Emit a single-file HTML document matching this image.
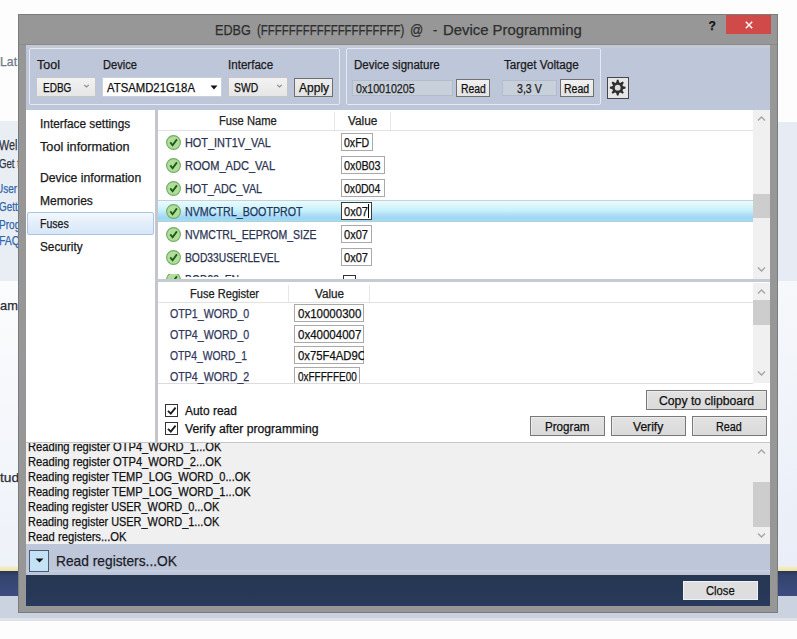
<!DOCTYPE html>
<html><head><meta charset="utf-8"><style>
html,body{margin:0;padding:0;width:797px;height:639px;overflow:hidden;background:#fff}
body{position:relative;font-family:"Liberation Sans",sans-serif}
div,span,svg{position:absolute}
span{white-space:nowrap;line-height:1;transform-origin:0 0;-webkit-text-stroke:0.25px currentColor}
</style></head><body>
<div style="left:0px;top:0px;width:797px;height:639px;background:#fdfdfd"></div>
<div style="left:0px;top:121px;width:18px;height:160px;background:#e9eef5"></div>
<div style="left:777px;top:122px;width:20px;height:159px;background:#e7ecf4"></div>
<div style="left:0px;top:281px;width:18px;height:285px;background:linear-gradient(#fbfcfd,#eef2f9)"></div>
<div style="left:777px;top:281px;width:20px;height:285px;background:linear-gradient(#f6f8fb,#e9eef8)"></div>
<div style="left:0px;top:566px;width:797px;height:5px;background:linear-gradient(#f3efd4,#efe3a4)"></div>
<div style="left:0px;top:571px;width:797px;height:25px;background:linear-gradient(#2a3758,#34446e 20%,#3c4c80)"></div>
<div style="left:0px;top:596px;width:797px;height:22px;background:#cad3df"></div>
<div style="left:0px;top:618px;width:797px;height:3px;background:#dde1e8"></div>
<span style="left:-0.50px;top:55px;font-size:13px;color:#6e7a88;transform:scaleX(0.9444);">Lat</span>
<span style="left:-1.00px;top:138px;font-size:14px;color:#30353e;transform:scaleX(0.7708);">Wel</span>
<span style="left:-1.50px;top:157px;font-size:13px;color:#30353e;transform:scaleX(0.7414);">Get t</span>
<span style="left:-4.00px;top:182px;font-size:13px;color:#2f66aa;transform:scaleX(0.7679);">User</span>
<span style="left:-1.50px;top:200px;font-size:13px;color:#2f66aa;transform:scaleX(0.7600);">Gett</span>
<span style="left:-1.50px;top:218px;font-size:13px;color:#2f66aa;transform:scaleX(0.7778);">Prog</span>
<span style="left:-1.50px;top:234px;font-size:13px;color:#2f66aa;transform:scaleX(0.8077);">FAQ</span>
<span style="left:0.00px;top:299px;font-size:13px;color:#262a33;transform:scaleX(0.9889);">am</span>
<span style="left:0.00px;top:472px;font-size:12px;color:#2a303c;transform:scaleX(1.1471);">tud</span>
<div style="left:18px;top:14px;width:760px;height:599px;background:#979797;box-shadow:inset 0 0 0 1px #7c7c7c"></div>
<div style="left:19px;top:44px;width:758px;height:1px;background:#8a8a8a"></div>
<span style="left:215.00px;top:23px;font-size:14px;color:#2e2e2e;transform:scaleX(0.9000);">EDBG</span>
<span style="left:257.00px;top:23px;font-size:14px;color:#2e2e2e;transform:scaleX(0.8167);">(FFFFFFFFFFFFFFFFFFFF)</span>
<span style="left:410.00px;top:23px;font-size:14px;color:#2e2e2e;transform:scaleX(0.9286);">@</span>
<span style="left:433.00px;top:23px;font-size:14px;color:#2e2e2e;transform:scaleX(0.9000);">-</span>
<span style="left:442.50px;top:23px;font-size:14px;color:#2e2e2e;transform:scaleX(1.0611);">Device Programming</span>
<span style="left:708.50px;top:20px;font-size:12px;color:#111;font-weight:bold;">?</span>
<div style="left:726px;top:15px;width:45px;height:19px;background:#d04a4a"></div>
<svg style="left:744px;top:20px" width="10" height="10" viewBox="0 0 10 10"><path d="M1.8 1.8L8.2 8.2M8.2 1.8L1.8 8.2" stroke="#fff" stroke-width="1.4"/></svg>
<div style="left:26px;top:45px;width:744px;height:65px;background:#bec6d9"></div>
<div style="left:26px;top:45px;width:744px;height:3px;background:#c4c9d6"></div>
<div style="left:29px;top:48px;width:311px;height:57px;border:1px solid #e4e9f2;border-radius:2px;box-sizing:border-box"></div>
<div style="left:346px;top:48px;width:255px;height:57px;border:1px solid #e4e9f2;border-radius:2px;box-sizing:border-box"></div>
<span style="left:36.70px;top:59px;font-size:12px;color:#1a1a1a;transform:scaleX(1.0409);">Tool</span>
<span style="left:102.60px;top:59px;font-size:12px;color:#1a1a1a;transform:scaleX(0.9243);">Device</span>
<span style="left:228.30px;top:59px;font-size:12px;color:#1a1a1a;transform:scaleX(0.9660);">Interface</span>
<span style="left:353.80px;top:59px;font-size:12px;color:#1a1a1a;transform:scaleX(0.9578);">Device signature</span>
<span style="left:503.70px;top:59px;font-size:12px;color:#1a1a1a;transform:scaleX(0.9753);">Target Voltage</span>
<div style="left:36px;top:77px;width:60px;height:20px;background:linear-gradient(#f2f2f2,#e6e6e6);border:1px solid #c6c6ca;box-sizing:border-box"></div>
<span style="left:42.50px;top:82px;font-size:12px;color:#111;transform:scaleX(0.8324);">EDBG</span>
<svg style="left:83px;top:83px" width="8" height="6" viewBox="0 0 8 6"><path d="M1.2 1.8L3.5 4L5.8 1.8" stroke="#8a8a8a" stroke-width="1.1" fill="none"/></svg>
<div style="left:102px;top:77px;width:120px;height:20px;background:#fff;border:1px solid #c8d0dc;box-sizing:border-box"></div>
<span style="left:107.00px;top:82px;font-size:12px;color:#111;transform:scaleX(0.9441);">ATSAMD21G18A</span>
<svg style="left:210px;top:85px" width="8" height="5" viewBox="0 0 8 5"><path d="M0.5 0.5H7.5L4 4.5Z" fill="#111"/></svg>
<div style="left:228px;top:77px;width:60px;height:20px;background:linear-gradient(#f2f2f2,#e6e6e6);border:1px solid #c6c6ca;box-sizing:border-box"></div>
<span style="left:234.20px;top:82px;font-size:12px;color:#111;transform:scaleX(0.8607);">SWD</span>
<svg style="left:276px;top:83px" width="8" height="6" viewBox="0 0 8 6"><path d="M1.2 1.8L3.5 4L5.8 1.8" stroke="#8a8a8a" stroke-width="1.1" fill="none"/></svg>
<div style="left:294px;top:78px;width:39px;height:19px;background:linear-gradient(#eeeeee,#e2e2e2);border:1px solid #6f6f6f;box-sizing:border-box"></div>
<span style="left:298.50px;top:82px;font-size:12px;color:#111;transform:scaleX(1.0033);">Apply</span>
<div style="left:352px;top:80px;width:101px;height:16px;background:#c8d0dc;border:1px solid #b2bccb;box-sizing:border-box"></div>
<span style="left:356.30px;top:83px;font-size:12px;color:#222;transform:scaleX(0.8864);">0x10010205</span>
<div style="left:456px;top:79px;width:34px;height:18px;background:linear-gradient(#f0f0f0,#e4e4e4);border:1px solid #707070;box-sizing:border-box"></div>
<span style="left:460.50px;top:83px;font-size:12px;color:#111;transform:scaleX(0.8655);">Read</span>
<div style="left:502px;top:80px;width:55px;height:16px;background:#c8d0dc;border:1px solid #b2bccb;box-sizing:border-box"></div>
<span style="left:517.10px;top:83px;font-size:12px;color:#222;transform:scaleX(0.8821);">3,3 V</span>
<div style="left:560px;top:79px;width:34px;height:18px;background:linear-gradient(#f0f0f0,#e4e4e4);border:1px solid #707070;box-sizing:border-box"></div>
<span style="left:564.30px;top:83px;font-size:12px;color:#111;transform:scaleX(0.8793);">Read</span>
<div style="left:607px;top:77px;width:22px;height:22px;background:#e6e6e6;border:1px solid #45454d;box-sizing:border-box"></div>
<svg style="left:607px;top:77px" width="22" height="22" viewBox="0 0 22 22"><polygon points="8.98,6.22 9.87,2.84 11.53,2.84 12.42,6.22 12.65,6.31 15.67,4.56 16.84,5.73 15.09,8.75 15.18,8.98 18.56,9.87 18.56,11.53 15.18,12.42 15.09,12.65 16.84,15.67 15.67,16.84 12.65,15.09 12.42,15.18 11.53,18.56 9.87,18.56 8.98,15.18 8.75,15.09 5.73,16.84 4.56,15.67 6.31,12.65 6.22,12.42 2.84,11.53 2.84,9.87 6.22,8.98 6.31,8.75 4.56,5.73 5.73,4.56 8.75,6.31" fill="#2f2f2f"/><circle cx="10.7" cy="10.7" r="5.4" fill="#2f2f2f"/><circle cx="10.7" cy="10.7" r="2.9" fill="#dedede"/></svg>
<div style="left:26px;top:110px;width:129px;height:332px;background:#fff"></div>
<div style="left:155px;top:110px;width:3px;height:332px;background:#c4c6cc"></div>
<span style="left:40.00px;top:118px;font-size:12px;color:#1a1a1a;transform:scaleX(0.9868);">Interface settings</span>
<span style="left:40.00px;top:141px;font-size:12px;color:#1a1a1a;transform:scaleX(1.0565);">Tool information</span>
<span style="left:40.00px;top:172px;font-size:12px;color:#1a1a1a;transform:scaleX(1.0182);">Device information</span>
<span style="left:40.00px;top:195px;font-size:12px;color:#1a1a1a;transform:scaleX(1.0038);">Memories</span>
<div style="left:27px;top:212px;width:127px;height:23px;background:linear-gradient(#f2f7fd,#d6e6f8);border:1px solid #a9c6e6;border-radius:2px;box-sizing:border-box"></div>
<span style="left:40.00px;top:218px;font-size:12px;color:#1a1a1a;transform:scaleX(0.8788);">Fuses</span>
<span style="left:40.00px;top:241px;font-size:12px;color:#1a1a1a;transform:scaleX(0.9814);">Security</span>
<div style="left:158px;top:110px;width:612px;height:169px;background:#fff"></div>
<div style="left:158px;top:130px;width:595px;height:1px;background:#e2e2e2"></div>
<div style="left:334px;top:112px;width:1px;height:18px;background:#e6e6e6"></div>
<div style="left:390px;top:112px;width:1px;height:18px;background:#e6e6e6"></div>
<span style="left:218.90px;top:115px;font-size:12px;color:#222;transform:scaleX(0.9290);">Fuse Name</span>
<span style="left:348.00px;top:115px;font-size:12px;color:#222;transform:scaleX(0.9867);">Value</span>
<div style="left:158px;top:200px;width:595px;height:22px;background:linear-gradient(#ebfbfe,#d9f6fc 25%,#c4f2fa 48%,#bde0f8 62%,#9ad8f6 85%,#a4ddf0);border-top:1px solid #bfd4dc;border-bottom:1px solid #b6ced8;box-sizing:border-box"></div>
<svg style="left:166px;top:135px" width="15" height="15" viewBox="0 0 15 15"><circle cx="7.5" cy="7.5" r="6.9" fill="#b0de9a" stroke="#72ab66" stroke-width="1.1"/><path d="M4.3 7.4L6.6 10.2L10.9 4.4" stroke="#1a5a14" stroke-width="1.8" fill="none"/></svg>
<div style="left:341px;top:133px;width:32px;height:18px;background:#fff;border:1px solid #a9a9a9;box-sizing:border-box"></div>
<span style="left:184.70px;top:137px;font-size:12px;color:#2a3350;transform:scaleX(0.9084);">HOT_INT1V_VAL</span>
<span style="left:344.10px;top:137px;font-size:12px;color:#111;transform:scaleX(0.8793);">0xFD</span>
<svg style="left:166px;top:158px" width="15" height="15" viewBox="0 0 15 15"><circle cx="7.5" cy="7.5" r="6.9" fill="#b0de9a" stroke="#72ab66" stroke-width="1.1"/><path d="M4.3 7.4L6.6 10.2L10.9 4.4" stroke="#1a5a14" stroke-width="1.8" fill="none"/></svg>
<div style="left:341px;top:156px;width:44px;height:18px;background:#fff;border:1px solid #a9a9a9;box-sizing:border-box"></div>
<span style="left:184.70px;top:160px;font-size:12px;color:#2a3350;transform:scaleX(0.9214);">ROOM_ADC_VAL</span>
<span style="left:344.10px;top:160px;font-size:12px;color:#111;transform:scaleX(0.9000);">0x0B03</span>
<svg style="left:166px;top:181px" width="15" height="15" viewBox="0 0 15 15"><circle cx="7.5" cy="7.5" r="6.9" fill="#b0de9a" stroke="#72ab66" stroke-width="1.1"/><path d="M4.3 7.4L6.6 10.2L10.9 4.4" stroke="#1a5a14" stroke-width="1.8" fill="none"/></svg>
<div style="left:341px;top:179px;width:44px;height:18px;background:#fff;border:1px solid #a9a9a9;box-sizing:border-box"></div>
<span style="left:184.70px;top:183px;font-size:12px;color:#2a3350;transform:scaleX(0.8988);">HOT_ADC_VAL</span>
<span style="left:344.10px;top:183px;font-size:12px;color:#111;transform:scaleX(0.8786);">0x0D04</span>
<svg style="left:166px;top:204px" width="15" height="15" viewBox="0 0 15 15"><circle cx="7.5" cy="7.5" r="6.9" fill="#b0de9a" stroke="#72ab66" stroke-width="1.1"/><path d="M4.3 7.4L6.6 10.2L10.9 4.4" stroke="#1a5a14" stroke-width="1.8" fill="none"/></svg>
<div style="left:341px;top:202px;width:31px;height:18px;background:#fff;border:1px solid #3c3c3c;box-sizing:border-box"></div>
<span style="left:184.70px;top:206px;font-size:12px;color:#1f3560;transform:scaleX(0.8910);">NVMCTRL_BOOTPROT</span>
<span style="left:344.10px;top:206px;font-size:12px;color:#111;transform:scaleX(0.9192);">0x07</span>
<svg style="left:166px;top:227px" width="15" height="15" viewBox="0 0 15 15"><circle cx="7.5" cy="7.5" r="6.9" fill="#b0de9a" stroke="#72ab66" stroke-width="1.1"/><path d="M4.3 7.4L6.6 10.2L10.9 4.4" stroke="#1a5a14" stroke-width="1.8" fill="none"/></svg>
<div style="left:341px;top:225px;width:31px;height:18px;background:#fff;border:1px solid #a9a9a9;box-sizing:border-box"></div>
<span style="left:184.70px;top:229px;font-size:12px;color:#2a3350;transform:scaleX(0.8760);">NVMCTRL_EEPROM_SIZE</span>
<span style="left:344.10px;top:229px;font-size:12px;color:#111;transform:scaleX(0.9192);">0x07</span>
<svg style="left:166px;top:250px" width="15" height="15" viewBox="0 0 15 15"><circle cx="7.5" cy="7.5" r="6.9" fill="#b0de9a" stroke="#72ab66" stroke-width="1.1"/><path d="M4.3 7.4L6.6 10.2L10.9 4.4" stroke="#1a5a14" stroke-width="1.8" fill="none"/></svg>
<div style="left:341px;top:248px;width:31px;height:18px;background:#fff;border:1px solid #a9a9a9;box-sizing:border-box"></div>
<span style="left:184.70px;top:252px;font-size:12px;color:#2a3350;transform:scaleX(0.8582);">BOD33USERLEVEL</span>
<span style="left:344.10px;top:252px;font-size:12px;color:#111;transform:scaleX(0.9192);">0x07</span>
<div style="left:368px;top:204px;width:1px;height:14px;background:#000"></div>
<div style="left:158px;top:274px;width:595px;height:5px;overflow:hidden"><svg style="left:8px;top:-2px" width="15" height="15" viewBox="0 0 15 15"><circle cx="7.5" cy="7.5" r="6.9" fill="#b0de9a" stroke="#72ab66" stroke-width="1.1"/><path d="M4.3 7.4L6.6 10.2L10.9 4.4" stroke="#1a5a14" stroke-width="1.8" fill="none"/></svg><div style="left:185px;top:1px;width:13px;height:13px;border:1px solid #333;box-sizing:border-box"></div></div>
<span style="left:184.70px;top:274px;font-size:12px;color:#2a3350;transform:scaleX(0.8619);clip-path:inset(0 0 9px 0)">BOD33_EN</span>
<div style="left:753px;top:110px;width:17px;height:169px;background:#f0f0f0"></div>
<div style="left:753px;top:194px;width:17px;height:24px;background:#cdcdcd"></div>
<svg style="left:757px;top:116px" width="9" height="6" viewBox="0 0 9 6"><path d="M1 4.5L4.5 1L8 4.5" stroke="#a4a4a4" stroke-width="1.3" fill="none"/></svg>
<svg style="left:757px;top:266px" width="9" height="6" viewBox="0 0 9 6"><path d="M1 1.5L4.5 5L8 1.5" stroke="#a4a4a4" stroke-width="1.3" fill="none"/></svg>
<div style="left:158px;top:279px;width:612px;height:3px;background:#c4cbd4"></div>
<div style="left:158px;top:282px;width:612px;height:160px;background:#fff"></div>
<div style="left:158px;top:302px;width:595px;height:1px;background:#e2e2e2"></div>
<div style="left:158px;top:383px;width:595px;height:1px;background:#dcdcdc"></div>
<div style="left:288px;top:285px;width:1px;height:17px;background:#e6e6e6"></div>
<div style="left:369px;top:285px;width:1px;height:17px;background:#e6e6e6"></div>
<span style="left:189.60px;top:288px;font-size:12px;color:#222;transform:scaleX(0.9240);">Fuse Register</span>
<span style="left:314.60px;top:288px;font-size:12px;color:#222;transform:scaleX(0.9767);">Value</span>
<span style="left:169.50px;top:308px;font-size:12px;color:#30375a;transform:scaleX(0.8867);">OTP1_WORD_0</span>
<span style="left:169.50px;top:329px;font-size:12px;color:#30375a;transform:scaleX(0.8867);">OTP4_WORD_0</span>
<span style="left:169.50px;top:350px;font-size:12px;color:#30375a;transform:scaleX(0.8611);">OTP4_WORD_1</span>
<span style="left:169.50px;top:371px;font-size:12px;color:#30375a;transform:scaleX(0.8867);">OTP4_WORD_2</span>
<div style="left:158px;top:303px;width:595px;height:80px;overflow:hidden">
<div style="left:136px;top:1px;width:70px;height:18px;background:#fff;border:1px solid #a9a9a9;box-sizing:border-box;overflow:hidden"></div>
<div style="left:136px;top:22px;width:70px;height:18px;background:#fff;border:1px solid #a9a9a9;box-sizing:border-box;overflow:hidden"></div>
<div style="left:136px;top:43px;width:70px;height:18px;background:#fff;border:1px solid #a9a9a9;box-sizing:border-box;overflow:hidden"></div>
<div style="left:136px;top:64px;width:66px;height:18px;background:#fff;border:1px solid #a9a9a9;box-sizing:border-box;overflow:hidden"></div>
</div>
<span style="left:298.00px;top:308px;font-size:12px;color:#111;transform:scaleX(0.9591);clip-path:inset(0 -2px 0 0)">0x10000300</span>
<span style="left:298.00px;top:329px;font-size:12px;color:#111;transform:scaleX(0.9591);clip-path:inset(0 -2px 0 0)">0x40004007</span>
<span style="left:298.00px;top:350px;font-size:12px;color:#111;transform:scaleX(0.9444);">0x75F4AD9C</span>
<span style="left:298.00px;top:371px;font-size:12px;color:#111;transform:scaleX(0.8310);clip-path:inset(0 -2px 0 0)">0xFFFFFE00</span>
<div style="left:364px;top:345px;width:5px;height:21px;background:#fff"></div>
<div style="left:753px;top:283px;width:17px;height:100px;background:#f0f0f0"></div>
<div style="left:753px;top:300px;width:17px;height:25px;background:#cdcdcd"></div>
<svg style="left:757px;top:289px" width="9" height="6" viewBox="0 0 9 6"><path d="M1 4.5L4.5 1L8 4.5" stroke="#a4a4a4" stroke-width="1.3" fill="none"/></svg>
<svg style="left:757px;top:370px" width="9" height="6" viewBox="0 0 9 6"><path d="M1 1.5L4.5 5L8 1.5" stroke="#a4a4a4" stroke-width="1.3" fill="none"/></svg>
<svg style="left:165px;top:404px" width="13" height="13" viewBox="0 0 13 13"><rect x="0.5" y="0.5" width="12" height="12" fill="#fff" stroke="#333"/><path d="M3 6.8L5.8 9.6L10.6 3.6" stroke="#1e1e1e" stroke-width="1.9" fill="none"/></svg>
<svg style="left:165px;top:422px" width="13" height="13" viewBox="0 0 13 13"><rect x="0.5" y="0.5" width="12" height="12" fill="#fff" stroke="#333"/><path d="M3 6.8L5.8 9.6L10.6 3.6" stroke="#1e1e1e" stroke-width="1.9" fill="none"/></svg>
<span style="left:184.50px;top:405px;font-size:12px;color:#111;transform:scaleX(0.9962);">Auto read</span>
<span style="left:184.50px;top:423px;font-size:12px;color:#111;transform:scaleX(1.0160);">Verify after programming</span>
<div style="left:646px;top:390px;width:121px;height:20px;background:linear-gradient(#e2e2e2,#dadada);border:1px solid #787878;box-shadow:inset 1px 1px 0 #ececec;box-sizing:border-box"></div>
<span style="left:659.00px;top:395px;font-size:12px;color:#111;transform:scaleX(1.0172);">Copy to clipboard</span>
<div style="left:530px;top:416px;width:75px;height:20px;background:linear-gradient(#e2e2e2,#dadada);border:1px solid #787878;box-shadow:inset 1px 1px 0 #ececec;box-sizing:border-box"></div>
<span style="left:545.00px;top:421px;font-size:12px;color:#111;transform:scaleX(0.9674);">Program</span>
<div style="left:611px;top:416px;width:75px;height:20px;background:linear-gradient(#e2e2e2,#dadada);border:1px solid #787878;box-shadow:inset 1px 1px 0 #ececec;box-sizing:border-box"></div>
<span style="left:633.00px;top:421px;font-size:12px;color:#111;transform:scaleX(1.0067);">Verify</span>
<div style="left:692px;top:416px;width:75px;height:20px;background:linear-gradient(#e2e2e2,#dadada);border:1px solid #787878;box-shadow:inset 1px 1px 0 #ececec;box-sizing:border-box"></div>
<span style="left:716.40px;top:421px;font-size:12px;color:#111;transform:scaleX(0.9000);">Read</span>
<div style="left:26px;top:442px;width:744px;height:102px;background:#f0f0f0"></div>
<div style="left:26px;top:442px;width:744px;height:1px;background:#c6c6c6"></div>
<div style="left:25px;top:443px;width:728px;height:101px;overflow:hidden">
<span style="left:2.80px;top:-2px;font-size:12px;color:#111;transform:scaleX(0.9298);">Reading register OTP4_WORD_1...OK</span>
<span style="left:2.80px;top:13px;font-size:12px;color:#111;transform:scaleX(0.9298);">Reading register OTP4_WORD_2...OK</span>
<span style="left:2.80px;top:28px;font-size:12px;color:#111;transform:scaleX(0.9207);">Reading register TEMP_LOG_WORD_0...OK</span>
<span style="left:2.80px;top:43px;font-size:12px;color:#111;transform:scaleX(0.9207);">Reading register TEMP_LOG_WORD_1...OK</span>
<span style="left:2.80px;top:58px;font-size:12px;color:#111;transform:scaleX(0.9100);">Reading register USER_WORD_0...OK</span>
<span style="left:2.80px;top:73px;font-size:12px;color:#111;transform:scaleX(0.9100);">Reading register USER_WORD_1...OK</span>
<span style="left:2.80px;top:88px;font-size:12px;color:#111;transform:scaleX(0.9352);">Read registers...OK</span>
</div>
<div style="left:753px;top:443px;width:17px;height:101px;background:#f0f0f0"></div>
<div style="left:753px;top:482px;width:17px;height:45px;background:#cdcdcd"></div>
<svg style="left:757px;top:449px" width="9" height="6" viewBox="0 0 9 6"><path d="M1 4.5L4.5 1L8 4.5" stroke="#a4a4a4" stroke-width="1.3" fill="none"/></svg>
<svg style="left:757px;top:532px" width="9" height="6" viewBox="0 0 9 6"><path d="M1 1.5L4.5 5L8 1.5" stroke="#a4a4a4" stroke-width="1.3" fill="none"/></svg>
<div style="left:26px;top:544px;width:744px;height:31px;background:#bec6d9"></div>
<div style="left:26px;top:570px;width:744px;height:2px;background:#c7cedd"></div>
<div style="left:29px;top:550px;width:20px;height:22px;background:#c4e2f6;border:1px solid #4d5c72;box-sizing:border-box"></div>
<svg style="left:35px;top:558px" width="9" height="5" viewBox="0 0 9 5"><path d="M0.5 0.5H8.5L4.5 4.5Z" fill="#111"/></svg>
<span style="left:55.70px;top:553px;font-size:15px;color:#1b1d28;transform:scaleX(0.9182);">Read registers...OK</span>
<div style="left:26px;top:575px;width:744px;height:31px;background:linear-gradient(#263752,#283959 80%,#2a3a5e)"></div>
<div style="left:683px;top:581px;width:75px;height:19px;background:#dedede;border:1px solid #eef0fa;box-sizing:border-box"></div>
<span style="left:706.00px;top:585px;font-size:12px;color:#111;transform:scaleX(0.9355);">Close</span>
</body></html>
